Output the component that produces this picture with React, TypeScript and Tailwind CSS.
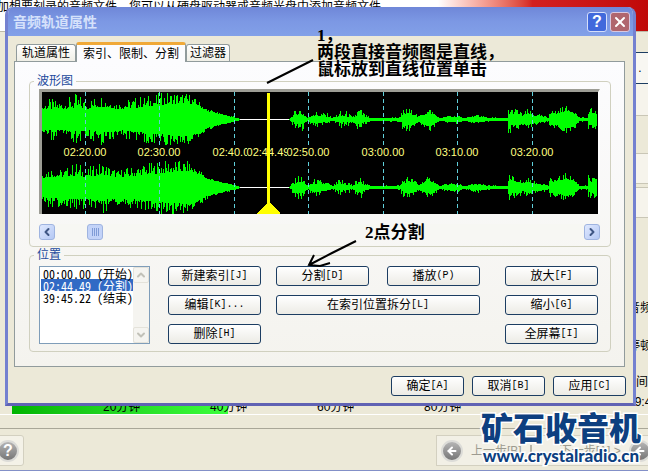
import type { ReactNode } from 'react'
import { ArrowLeft, ArrowRight, ChevronDown, ChevronLeft, ChevronRight, ChevronUp, X } from 'lucide-react'

type Point = [x: number, core: number, peak: number]

const LOUD: Point[] = [
  [0, 9, 17], [8, 10, 21], [20, 10, 18], [34, 11, 26], [44, 10, 19], [60, 12, 26], [75, 10, 17],
  [92, 11, 22], [110, 13, 25], [130, 15, 28], [146, 16, 26], [156, 13, 19], [164, 8, 11],
  [180, 4, 5], [190, 2, 3], [198, 0, 0],
]

const QUIET: Point[] = [
  [247, 0, 0], [250, 2, 6], [257, 5, 14], [262, 3, 9], [265, 1, 2], [271, 3, 9], [285, 2, 6],
  [290, 1, 1], [296, 2, 8], [305, 2, 9], [310, 1, 2], [317, 4, 13], [323, 2, 5], [328, 1, 1],
  [358, 1, 2], [360, 3, 10], [366, 5, 12], [373, 4, 7], [376, 1, 3], [381, 4, 8], [388, 6, 11],
  [393, 3, 6], [397, 1, 1], [408, 2, 5], [416, 2, 4], [421, 1, 1], [436, 2, 5], [446, 1, 2],
  [465, 1, 1], [466, 5, 13], [475, 5, 11], [480, 3, 6], [485, 5, 10], [491, 3, 6], [501, 2, 4],
  [506, 1, 2], [507, 5, 9], [515, 5, 10], [523, 8, 14], [531, 6, 11], [537, 1, 2], [545, 1, 2],
  [546, 4, 12], [552, 6, 10], [555, 5, 8],
]

const TICKS = [
  { x: 43, label: '02:20.00' },
  { x: 117, label: '02:30.00' },
  { x: 192, label: '02:40.00' },
  { x: 226, label: '02:44.49' },
  { x: 266, label: '02:50.00' },
  { x: 341, label: '03:00.00' },
  { x: 415, label: '03:10.00' },
  { x: 490, label: '03:20.00' },
]

function noise(n: number) {
  const v = Math.sin(n * 12.9898) * 43758.5453
  return v - Math.floor(v)
}

function wavePath(points: Point[], center: number, seed: number) {
  let d = ''
  for (let i = 0; i < points.length - 1; i++) {
    const [x0, c0, p0] = points[i]
    const [x1, c1, p1] = points[i + 1]
    for (let x = x0; x < x1; x++) {
      const t = (x - x0) / (x1 - x0)
      const core = c0 + (c1 - c0) * t
      const peak = p0 + (p1 - p0) * t
      const up = core + (peak - core) * noise(x + seed) ** 2
      const down = core + (peak - core) * noise(x * 3 + seed) ** 2
      d += `M${x + 0.5} ${Math.round(center - up)}V${Math.round(center + down) + 1}`
    }
  }
  return d
}

function Waveform() {
  return (
    <div className="h-[125px] overflow-hidden border-t-[3px] border-l-[3px] border-[#9d9d95] border-r-2 border-r-white bg-black">
      <svg width="100%" height="122" shapeRendering="crispEdges" aria-label="波形图">
        <path d="M0 27.5H555M0 95.5H555" stroke="#fff" />
        <g stroke="#00ff00" fill="none">
          <path d={wavePath(LOUD, 27, 3)} />
          <path d={wavePath(LOUD, 95, 71)} />
          <path d={wavePath(QUIET, 27, 11)} />
          <path d={wavePath(QUIET, 95, 43)} />
        </g>
        {TICKS.filter((t) => t.x !== 226).map((t) => (
          <path key={t.x} d={`M${t.x + 0.5} 0V122`} stroke="#5fd0dc" strokeDasharray="4 3" />
        ))}
        {TICKS.map((t) => (
          <g key={t.label}>
            <rect x={t.x - 21} y="53" width="42" height="14" fill="#000" />
            <text
              x={t.x}
              y="64"
              textAnchor="middle"
              fill="#ffff80"
              className="font-['Liberation_Sans',sans-serif] text-[11px]"
            >
              {t.label}
            </text>
          </g>
        ))}
        <path d="M225 1H228V111L238 121V122H215V121L225 111Z" fill="#ffff00" />
      </svg>
    </div>
  )
}

function Key({ children }: { children: ReactNode }) {
  return <span className="font-['Liberation_Mono',monospace] text-[10px]">{children}</span>
}

function PushButton({ label, hotkey, className = '' }: { label: string; hotkey: string; className?: string }) {
  return (
    <button
      className={`flex h-5 items-center justify-center whitespace-nowrap rounded-[3px] border border-[#1c3d62] bg-linear-to-b from-white to-[#ecebe5] text-xs leading-none text-black ${className}`}
    >
      {label}
      <Key>{hotkey}</Key>
    </button>
  )
}

function ScrollButton({ label, children }: { label: string; children: ReactNode }) {
  return (
    <button
      aria-label={label}
      className="flex h-4 w-4 items-center justify-center rounded-[3px] border border-[#9fb4e0] bg-linear-to-br from-[#dfe8fe] to-[#b4c8f4] text-[#3f5684]"
    >
      {children}
    </button>
  )
}

function Group({ title, className, children }: { title: string; className: string; children: ReactNode }) {
  return (
    <fieldset className={`min-w-0 rounded-[4px] border border-[#d0d0bf] ${className}`}>
      <legend className="-ml-[5px] px-[3px] text-xs leading-4 text-[#1c4a9c]">{title}</legend>
      {children}
    </fieldset>
  )
}

function TrackDialog() {
  return (
    <section
      role="dialog"
      aria-label="音频轨道属性"
      className="absolute top-[7px] right-3 left-[5px] flex flex-col overflow-hidden rounded-t-lg border-x-[3px] border-b-[3px] border-x-[#7481d0] border-b-[#6062b4] bg-[#ece9d8]"
    >
      <header className="flex h-[29px] items-center gap-[3px] bg-linear-to-b from-[#6f87d8] via-[#7c98e4] to-[#82a0e8] pr-[3px] pl-[5px]">
        <h1 className="flex-1 text-sm font-bold text-[#d5e1fb]">音频轨道属性</h1>
        <button
          aria-label="帮助"
          className="flex h-5 w-5 items-center justify-center rounded-[3px] border border-[#d5defa] bg-[#4169dc] font-['Liberation_Sans',sans-serif] text-base leading-none font-bold text-white"
        >
          ?
        </button>
        <button
          aria-label="关闭"
          className="flex h-5 w-5 items-center justify-center rounded-[3px] border border-[#d8c8e0] bg-[#b0666e] text-white"
        >
          <X className="h-4 w-4" strokeWidth={3} />
        </button>
      </header>

      <div className="px-[6px] pt-[6px]">
        <div role="tablist" className="flex items-end pl-[2px] text-xs leading-4">
          <button
            role="tab"
            className="h-[17px] rounded-t-[3px] border border-b-0 border-[#919b9c] bg-linear-to-b from-white to-[#f0efe6] px-[5px]"
          >
            轨道属性
          </button>
          <button
            role="tab"
            aria-selected="true"
            className="relative -mb-px h-5 rounded-t-[3px] border border-t-[3px] border-b-0 border-[#919b9c] border-t-[#f0a938] bg-[#fcfcfe] px-[6px]"
          >
            索引、限制、分割
          </button>
          <button
            role="tab"
            className="h-[17px] rounded-t-[3px] border border-b-0 border-[#919b9c] bg-linear-to-b from-white to-[#f0efe6] px-[3px]"
          >
            过滤器
          </button>
        </div>

        <div
          role="tabpanel"
          className="mr-[2px] border border-[#919b9c] bg-linear-to-b from-[#fcfcfe] to-[#f4f3ee] pt-[11px] pr-[13px] pb-[14px] pl-[14px]"
        >
          <Group title="波形图" className="pr-[10px] pb-[6px] pl-[9px]">
            <Waveform />
            <div className="mt-[10px] flex h-4 items-center bg-[#f7f7f3]">
              <ScrollButton label="向左滚动">
                <ChevronLeft className="h-3 w-3" strokeWidth={4} />
              </ScrollButton>
              <div className="flex-1 pl-8">
                <div className="flex h-4 w-4 items-center justify-center gap-px rounded-[3px] border border-[#9fb4e0] bg-[#c3d3f8]">
                  <i className="h-2 w-px bg-[#7f9bd6]" />
                  <i className="h-2 w-px bg-[#7f9bd6]" />
                  <i className="h-2 w-px bg-[#7f9bd6]" />
                  <i className="h-2 w-px bg-[#7f9bd6]" />
                </div>
              </div>
              <ScrollButton label="向右滚动">
                <ChevronRight className="h-3 w-3" strokeWidth={4} />
              </ScrollButton>
            </div>
          </Group>

          <Group title="位置" className="pr-3 pb-[7px] pl-[9px]">
            <div className="flex pt-[3px]">
              <div className="flex h-[78px] w-[111px] border border-[#7f9db9] bg-white">
                <select
                  size={6}
                  aria-label="位置"
                  defaultValue="split"
                  className="h-full w-[93px] appearance-none overflow-hidden pl-px font-['Noto_Sans_CJK_SC',sans-serif] text-xs [font-feature-settings:'hwid'] *:flex *:h-3 *:min-h-0 *:items-center *:py-0 *:pr-0 *:pl-[2px] *:checked:bg-[#316ac5] *:checked:bg-linear-to-r *:checked:from-[#316ac5] *:checked:to-[#316ac5] *:checked:text-white"
                >
                  <option value="start">00:00.00 (开始)</option>
                  <option value="split">02:44.49 (分割)</option>
                  <option value="end">39:45.22 (结束)</option>
                </select>
                <div className="flex w-4 flex-col justify-between bg-[#f5f4f0] text-[#c2c1b8]">
                  <button aria-label="向上" className="flex h-4 items-center justify-center rounded-[2px] border border-[#e4e2da]">
                    <ChevronUp className="h-3 w-3" strokeWidth={4} />
                  </button>
                  <button aria-label="向下" className="flex h-4 items-center justify-center rounded-[2px] border border-[#e4e2da]">
                    <ChevronDown className="h-3 w-3" strokeWidth={4} />
                  </button>
                </div>
              </div>

              <div className="ml-[18px] flex w-[93px] flex-col gap-[9px]">
                <PushButton label="新建索引" hotkey="[J]" />
                <PushButton label="编辑" hotkey="[K]..." />
                <PushButton label="删除" hotkey="[H]" />
              </div>
              <div className="ml-[15px] grid w-[204px] grid-cols-2 content-start gap-x-[18px] gap-y-[9px]">
                <PushButton label="分割" hotkey="[D]" />
                <PushButton label="播放" hotkey="(P)" />
                <PushButton label="在索引位置拆分" hotkey="[L]" className="col-span-2" />
              </div>
              <div className="ml-auto flex w-[93px] flex-col gap-[9px]">
                <PushButton label="放大" hotkey="[F]" />
                <PushButton label="缩小" hotkey="[G]" />
                <PushButton label="全屏幕" hotkey="[I]" />
              </div>
            </div>
          </Group>
        </div>

        <div className="flex justify-end gap-2 pt-[9px] pr-px pb-[7px]">
          <PushButton label="确定" hotkey="[A]" className="w-[73px]" />
          <PushButton label="取消" hotkey="[B]" className="w-[73px]" />
          <PushButton label="应用" hotkey="[C]" className="w-[73px]" />
        </div>
      </div>
    </section>
  )
}

function Notes() {
  return (
    <div className="pointer-events-none absolute inset-0 font-['Liberation_Serif','Noto_Sans_CJK_SC',serif] text-[17px] leading-[17px] font-bold text-black">
      <p className="absolute top-[27px] left-[317px] whitespace-nowrap">
        1，
        <br />
        两段直接音频图是直线，
        <br />
        鼠标放到直线位置单击
      </p>
      <p className="absolute top-[224px] left-[365px] whitespace-nowrap">2点分割</p>
      <svg className="absolute top-0 left-0" width="400" height="280" fill="none" stroke="#000" strokeWidth="2">
        <path d="M313 60L291 71L267 83" />
        <path d="M356 241L332 253L309 265M314 255L309 265L320 266L330 263" />
      </svg>
    </div>
  )
}

function RoundIcon({ children }: { children: ReactNode }) {
  return (
    <span className="flex h-[22px] w-[22px] shrink-0 items-center justify-center rounded-full border-2 border-[#dcdcd8] bg-linear-to-b from-[#b5b5b5] to-[#777] text-white">
      {children}
    </span>
  )
}

export default function App() {
  return (
    <div className="relative flex min-h-screen flex-col overflow-hidden bg-[#ece9d8] font-['Liberation_Sans','Noto_Sans_CJK_SC',sans-serif] text-xs text-black">
      <div className="flex h-8 justify-between border-b border-[#bdbaa8] bg-white">
        <p className="-ml-[3px] whitespace-nowrap leading-[14px]">
          加想要刻录的音频文件，您可以从硬盘驱动器或音频光盘中添加音频文件
        </p>
        <div className="w-[210px] bg-linear-to-r from-white via-[#d42020] via-45% to-[#c00808]" />
      </div>

      <div className="flex h-[366px] justify-end">
        <div className="w-5 whitespace-nowrap pt-5 leading-3">
          <button className="ml-1 block h-8 w-4 border-y border-[#1c3d62] bg-[#f8f7f2]">.</button>
          <div className="ml-1 h-8 border-b border-[#c9c6b6] bg-[#f6f4ec]" />
          <div className="ml-1 h-[38px] border-b border-[#c9c6b6]" />
          <div className="ml-1 h-[30px] border-b border-[#c9c6b6] bg-[#f6f4ec]" />
          <div className="mt-[3px] ml-1 h-[31px] border-y border-[#c9c6b6] bg-[#f6f4ec]" />
          <p className="mt-[84px]">音频</p>
          <p className="mt-[26px]">停顿</p>
          <p className="mt-6 pl-2">间</p>
          <p className="mt-2">39:45</p>
        </div>
      </div>

      <div className="flex h-[17px] border-b border-white pl-3 leading-[18px]">
        <div className="relative flex w-full">
          <div className="absolute inset-y-0 left-0 w-[216px] bg-linear-to-r from-[#00b400] to-[#3cff3c]" />
          <span className="relative w-[107px] pl-[91px] whitespace-nowrap">20分钟</span>
          <span className="relative w-[107px] pl-[91px] whitespace-nowrap">40分钟</span>
          <span className="relative w-[107px] pl-[91px] whitespace-nowrap">60分钟</span>
          <span className="relative w-[107px] pl-[91px] whitespace-nowrap">80分钟</span>
        </div>
      </div>

      <footer className="mt-[13px] flex h-[43px] items-start justify-between overflow-hidden border-t border-b border-t-[#a9a798] border-b-[#8390c8] pt-[6px]">
        <button
          aria-label="帮助"
          className="-ml-1 flex h-[31px] w-7 items-center rounded-r-[3px] border border-[#d3d0c0] bg-[#f4f2e8]"
        >
          <RoundIcon>
            <span className="text-base leading-none font-bold">?</span>
          </RoundIcon>
        </button>
        <div className="flex h-[31px] w-[212px] items-center border border-r-0 border-[#d3d0c0] bg-[#f2f0e6] pl-1 whitespace-nowrap text-[#9d9b90]">
          <button className="flex items-center gap-2">
            <RoundIcon>
              <ArrowLeft className="h-3 w-3" strokeWidth={4} />
            </RoundIcon>
            上一步[B]
          </button>
          <i className="ml-2 h-3 w-1 border-x border-[#b5b3a6]" />
          <button className="ml-7 flex items-center gap-2">
            下一步[A] &gt;
            <RoundIcon>
              <ArrowLeft className="h-3 w-3" strokeWidth={4} />
            </RoundIcon>
          </button>
        </div>
      </footer>

      <TrackDialog />
      <Notes />

      <a
        href="http://www.crystalradio.cn"
        className="absolute right-[7px] bottom-[5px] flex flex-col items-center gap-1 text-[#0d3f80] [paint-order:stroke_fill] [-webkit-text-stroke:3px_white]"
      >
        <span className="font-['Noto_Sans_CJK_SC',sans-serif] text-[32px] leading-8 font-black">矿石收音机</span>
        <span className="font-['Lato',sans-serif] text-[17px] leading-5 font-black">www.crystalradio.cn</span>
      </a>
    </div>
  )
}
